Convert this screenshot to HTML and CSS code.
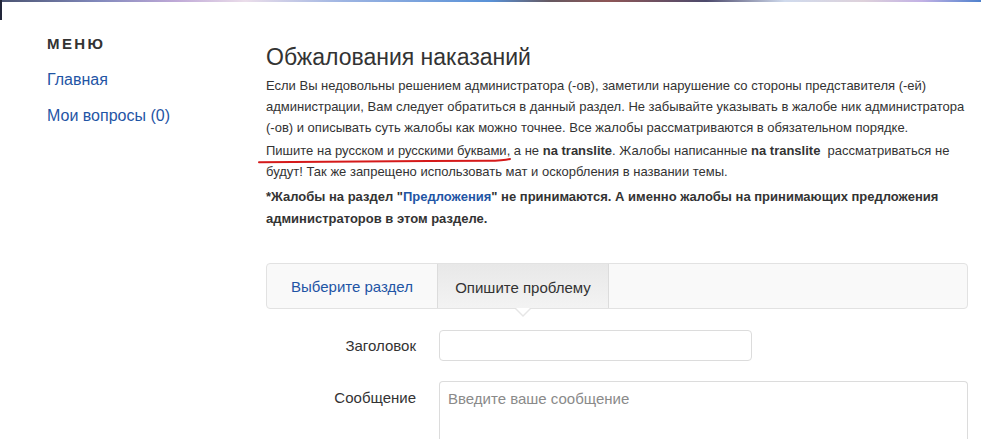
FILE: index.html
```html
<!DOCTYPE html>
<html lang="ru">
<head>
<meta charset="utf-8">
<title>Обжалования наказаний</title>
<link rel="stylesheet" href="styles.css">
</head>
<body>
<div class="topstrip"></div>
<div class="leftedge"></div>
<div class="page">
  <aside class="sidebar">
    <div class="menu-title">МЕНЮ</div>
    <a class="menu-link" href="#">Главная</a>
    <a class="menu-link" href="#">Мои вопросы (0)</a>
  </aside>
  <main class="main">
    <h1 class="title">Обжалования наказаний</h1>
    <p class="para">Если Вы недовольны решением администратора (-ов), заметили нарушение со стороны представителя (-ей) администрации, Вам следует обратиться в данный раздел. Не забывайте указывать в жалобе ник администратора (-ов) и описывать суть жалобы как можно точнее. Все жалобы рассматриваются в обязательном порядке.</p>
    <p class="para">Пишите на русском и русскими буквами, а не <b>na translite</b>. Жалобы написанные <b>na translite</b>&nbsp; рассматриваться не будут! Так же запрещено использовать мат и оскорбления в названии темы.</p>
    <p class="para bold">*Жалобы на раздел "<a href="#" class="inlink">Предложения</a>" не принимаются. А именно жалобы на принимающих предложения администраторов в этом разделе.</p>
    <svg class="scribble" width="260" height="8" viewBox="0 0 260 8"><path d="M1 6.2 C 60 5.6, 150 5.0, 230 4.8 C 240 4.8, 246 4.6, 252 3" fill="none" stroke="#d51a1a" stroke-width="2" stroke-linecap="round"/></svg>

    <div class="tabs">
      <a class="tab" href="#">Выберите раздел</a>
      <span class="tab active">Опишите проблему</span>
    </div>

    <form class="form">
      <label class="label">Заголовок</label>
      <input class="input" type="text">
      <label class="label label-top">Сообщение</label>
      <textarea class="textarea" placeholder="Введите ваше сообщение"></textarea>
    </form>
  </main>
</div>
</body>
</html>
```

FILE: styles.css
```css
html, body {
  margin: 0;
  padding: 0;
  background: #fff;
  overflow: hidden;
}
body {
  font-family: "Liberation Sans", Arial, sans-serif;
  color: #333;
  position: relative;
  height: 439px;
}
.topstrip {
  position: absolute;
  left: 0; top: 0; right: 0;
  height: 2px;
  background: linear-gradient(90deg, #2a3558 0%, #6b74b0 10%, #b49ad0 18%, #e7d7e6 25%, #8ca7dd 35%, #3b7ed0 50%, #4a3b45 56%, #7a3838 62%, #2d2a52 72%, #c7d4ea 80%, #d8c9d4 88%, #b7a3e0 94%, #2f6bc4 100%);
  opacity: 0.85;
}
.leftedge {
  position: absolute;
  left: 0; top: 0;
  width: 2px; height: 20px;
  background: #22263a;
}
.page {
  display: grid;
  grid-template-columns: 266px 1fr;
  padding-right: 13px;
}
.sidebar {
  padding: 35px 0 0 47px;
  display: flex;
  flex-direction: column;
}
.menu-title {
  font-weight: bold;
  font-size: 15px;
  letter-spacing: 2.4px;
  color: #333;
  line-height: 18px;
  margin-bottom: 18px;
}
.menu-link {
  color: #1f55a5;
  text-decoration: none;
  font-size: 16px;
  line-height: 18px;
  margin-bottom: 18px;
}
.main {
  position: relative;
  padding-top: 44px;
}
.title {
  font-weight: normal;
  font-size: 23px;
  line-height: 27px;
  margin: 0 0 4px;
  color: #333;
}
.para {
  font-size: 13px;
  line-height: 21px;
  margin: 0 0 2px;
  color: #333;
}
.para.bold {
  font-weight: bold;
  line-height: 22px;
  margin-top: 4px;
}
.inlink {
  color: #1f55a5;
  text-decoration: none;
}
.scribble {
  position: absolute;
  left: -8px;
  top: 156px;
}
.tabs {
  margin-top: 33px;
  border: 1px solid #e2e2e2;
  border-radius: 4px;
  background: #f9f9f9;
  display: flex;
  box-sizing: border-box;
  height: 46px;
}
.tab {
  display: flex;
  align-items: center;
  justify-content: center;
  font-size: 15px;
  color: #1f55a5;
  text-decoration: none;
  width: 170px;
  box-sizing: border-box;
  white-space: nowrap;
}
.tab.active {
  color: #333;
  width: 172px;
  background: linear-gradient(#e8e8e8, #f3f3f3);
  border-left: 1px solid #dcdcdc;
  border-right: 1px solid #dcdcdc;
  position: relative;
  padding-top: 2px;
}
.tab.active::after {
  content: "";
  position: absolute;
  left: 50%;
  bottom: -9px;
  margin-left: -8px;
  width: 0; height: 0;
  border-left: 8px solid transparent;
  border-right: 8px solid transparent;
  border-top: 8px solid #e6e6e6;
}
.tab.active::before {
  content: "";
  position: absolute;
  left: 50%;
  bottom: -7px;
  margin-left: -7px;
  width: 0; height: 0;
  border-left: 7px solid transparent;
  border-right: 7px solid transparent;
  border-top: 7px solid #fff;
  z-index: 1;
}
.form {
  margin-top: 21px;
  display: grid;
  grid-template-columns: 150px 1fr;
  column-gap: 23px;
  row-gap: 20px;
  align-items: center;
}
.label {
  text-align: right;
  font-size: 15px;
  color: #333;
}
.label-top {
  align-self: start;
  padding-top: 8px;
}
.input {
  width: 313px;
  height: 31px;
  box-sizing: border-box;
  border: 1px solid #dcdcdc;
  border-radius: 4px;
  font-size: 15px;
  padding: 4px 8px;
}
.textarea {
  width: 100%;
  height: 62px;
  box-sizing: border-box;
  border: 1px solid #dcdcdc;
  border-bottom: none;
  border-radius: 4px 4px 0 0;
  font-family: "Liberation Sans", Arial, sans-serif;
  font-size: 15px;
  padding: 8px 8px;
  resize: none;
  display: block;
}
.textarea::placeholder {
  color: #8a8a8a;
}
```
